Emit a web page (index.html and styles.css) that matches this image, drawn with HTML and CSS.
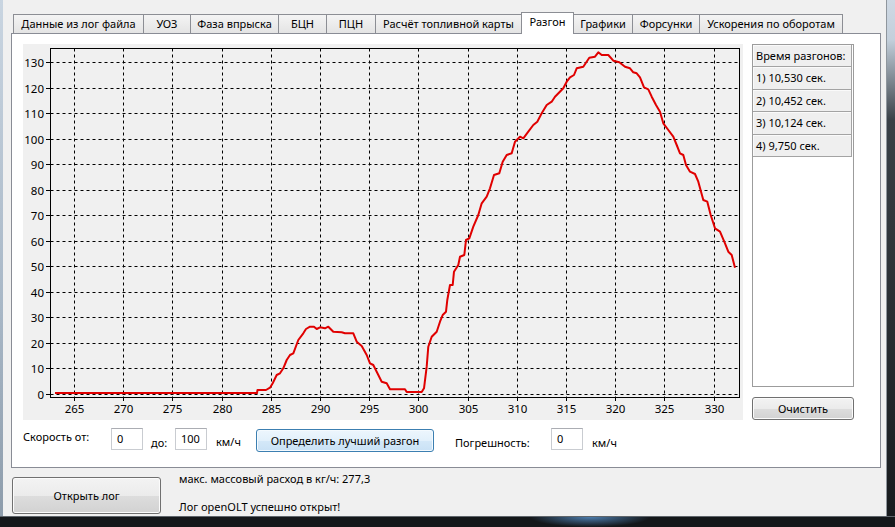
FILE: index.html
```html
<!DOCTYPE html>
<html lang="ru">
<head>
<meta charset="utf-8">
<title>Разгон</title>
<link rel="stylesheet" href="styles.css">
</head>
<body>
<div class="screen">
  <div class="frame-left"></div>
  <div class="client">
    <div class="tabwidget">
      <div class="tabbar">
        <div class="tab">Данные из лог файла</div>
        <div class="tab">УОЗ</div>
        <div class="tab">Фаза впрыска</div>
        <div class="tab">БЦН</div>
        <div class="tab">ПЦН</div>
        <div class="tab">Расчёт топливной карты</div>
        <div class="tab active">Разгон</div>
        <div class="tab">Графики</div>
        <div class="tab">Форсунки</div>
        <div class="tab">Ускорения по оборотам</div>
      </div>
      <div class="pane">
        <div class="pane-main">
          <svg class="chart" width="720" height="376" viewBox="0 0 720 376">
            <rect x="0" y="0" width="720" height="376" fill="#f0f0f0"/>
            <path class="grid" d="M51.5 4.5V353 M100.5 4.5V353 M149.5 4.5V353 M199.5 4.5V353 M248.5 4.5V353 M297.5 4.5V353 M346.5 4.5V353 M395.5 4.5V353 M445.5 4.5V353 M494.5 4.5V353 M543.5 4.5V353 M592.5 4.5V353 M641.5 4.5V353 M691.5 4.5V353
              M27.5 18.5H716.5 M27.5 44.5H716.5 M27.5 69.5H716.5 M27.5 95.5H716.5 M27.5 120.5H716.5 M27.5 146.5H716.5 M27.5 171.5H716.5 M27.5 197.5H716.5 M27.5 222.5H716.5 M27.5 248.5H716.5 M27.5 273.5H716.5 M27.5 299.5H716.5 M27.5 324.5H716.5 M27.5 350.5H716.5"/>
            <rect class="frame" x="27.5" y="4.5" width="689" height="349"/>
            <path class="ticks" d="M23 18.5H27.5 M23 44.5H27.5 M23 69.5H27.5 M23 95.5H27.5 M23 120.5H27.5 M23 146.5H27.5 M23 171.5H27.5 M23 197.5H27.5 M23 222.5H27.5 M23 248.5H27.5 M23 273.5H27.5 M23 299.5H27.5 M23 324.5H27.5 M23 350.5H27.5
              M51.5 353V357 M100.5 353V357 M149.5 353V357 M199.5 353V357 M248.5 353V357 M297.5 353V357 M346.5 353V357 M395.5 353V357 M445.5 353V357 M494.5 353V357 M543.5 353V357 M592.5 353V357 M641.5 353V357 M691.5 353V357"/>
            <g class="ylab">
              <text x="21" y="22.5">130</text>
              <text x="21" y="48.5">120</text>
              <text x="21" y="73.5">110</text>
              <text x="21" y="99.5">100</text>
              <text x="21" y="124.5">90</text>
              <text x="21" y="150.5">80</text>
              <text x="21" y="175.5">70</text>
              <text x="21" y="201.5">60</text>
              <text x="21" y="226.5">50</text>
              <text x="21" y="252.5">40</text>
              <text x="21" y="277.5">30</text>
              <text x="21" y="303.5">20</text>
              <text x="21" y="328.5">10</text>
              <text x="21" y="354.5">0</text>
            </g>
            <g class="xlab">
              <text x="51.5" y="369">265</text>
              <text x="100.5" y="369">270</text>
              <text x="149.5" y="369">275</text>
              <text x="199.5" y="369">280</text>
              <text x="248.5" y="369">285</text>
              <text x="297.5" y="369">290</text>
              <text x="346.5" y="369">295</text>
              <text x="395.5" y="369">300</text>
              <text x="445.5" y="369">305</text>
              <text x="494.5" y="369">310</text>
              <text x="543.5" y="369">315</text>
              <text x="592.5" y="369">320</text>
              <text x="641.5" y="369">325</text>
              <text x="691.5" y="369">330</text>
            </g>
            <g transform="translate(-23 -44)">
              <polyline class="curve" points="55,393 257,393 257.5,390 266,390 270,387.7 272.7,383.3 276.7,375 280,373.3 283.3,368.3 286.7,360 290,355 293.3,353.3 298.3,340 303.3,333.3 306,329 310,326.7 314,326.7 316.7,329 320,327.3 325,328.3 328.3,326.7 333.3,331.7 341.7,332.3 345,333.3 353.3,333.3 356.7,341.7 361.7,346 366.7,355 370,363.3 373.3,365 376.7,371.7 381.7,381.7 386.7,383.3 390,389.3 405,389.3 406.7,392 421.7,392 424,388.3 426.7,366.7 428.3,346.7 431.7,336.7 436.7,331.7 440,321.7 442.7,315 446,311.7 447.3,300 450,285 452.7,285 454,271.7 458.3,265 460,256.7 464.3,255 466,240 469.3,238.3 473.3,226.7 478.3,215 481.7,203.3 486.7,196.7 490,188.3 494,175 499.3,173.3 502.7,161.7 506.7,155 511.7,153.3 515,141.7 520,136.7 523.3,138.3 528.3,131.7 533.3,125 537.3,121.7 541.7,113.3 546.7,105 551.7,101.7 555,96.7 563.3,88.3 566.7,81.7 570,77.3 574,75 576.7,68.3 583.3,66.7 589.3,57.7 595,56.7 598.3,52.3 601.7,55 608.3,55 613.3,60.7 619.3,62.3 625,66.7 630,68.3 633.3,72.3 636.7,73.3 640,77.3 644,87.3 648.3,89.3 651.7,96.7 656,105 660,111.7 663.3,123.3 668.3,130 673.3,136.7 676.7,145 680,153.3 683.3,155 686,165 690,171.7 695,174 698.3,181.7 703.3,200 707.3,201.7 710.7,215 715,228.3 720,231.7 725,243.3 728.3,251.7 731.7,255 735,267.7"/>
            </g>
          </svg>
          <div class="side">
            <div class="list">
              <div class="item">Время разгонов:</div>
              <div class="item">1) 10,530 сек.</div>
              <div class="item">2) 10,452 сек.</div>
              <div class="item">3) 10,124 сек.</div>
              <div class="item">4) 9,750 сек.</div>
            </div>
            <button class="btn btn-clear">Очистить</button>
          </div>
        </div>
        <div class="controls">
          <span class="lbl lbl-from">Скорость от:</span>
          <div class="field">0</div>
          <span class="lbl lbl-to">до:</span>
          <div class="field">100</div>
          <span class="lbl lbl-unit">км/ч</span>
          <button class="btn btn-primary">Определить лучший разгон</button>
          <span class="lbl lbl-err">Погрешность:</span>
          <div class="field">0</div>
          <span class="lbl lbl-unit2">км/ч</span>
        </div>
      </div>
    </div>
    <div class="bottom">
      <button class="btn btn-open">Открыть лог</button>
      <div class="status">
        <div class="status-line">макс. массовый расход в кг/ч: 277,3</div>
        <div class="status-line second">Лог openOLT успешно открыт!</div>
      </div>
    </div>
  </div>
  <div class="frame-right"></div>
</div>
<div class="frame-bottom"></div>
</body>
</html>
```

FILE: styles.css
```css
html, body {
  margin: 0;
  padding: 0;
}
body {
  width: 895px;
  height: 527px;
  overflow: hidden;
  background: #14171a;
  font-family: "Noto Sans", "Open Sans", sans-serif;
  font-size: 11px;
  color: #000;
}
.screen {
  display: flex;
  height: 516px;
}
.frame-left {
  width: 3px;
  background: linear-gradient(#c9d5e1, #a8b7c6 60%, #8d9cab);
}
.client {
  box-sizing: border-box;
  width: 884px;
  padding: 12px 0 0 8px;
  background: #f0f0f0;
  border-right: 1px solid #8f969d;
}
.frame-right {
  width: 8px;
  background: linear-gradient(#cfd9e4 0, #c3cfdb 40px, #3a4148 120px, #181b1e 100%);
}
.frame-bottom {
  box-sizing: border-box;
  height: 11px;
  border-top: 1px solid #5f656b;
  background: radial-gradient(ellipse 60px 10px at 590px 0, rgba(90, 150, 210, 0.8), rgba(20, 23, 26, 0)), #14171a;
}

/* Tabs */
.tabwidget {
  width: 870px;
}
.tabbar {
  display: flex;
  align-items: flex-end;
  height: 21px;
  padding-left: 2px;
}
.tab {
  box-sizing: border-box;
  height: 19px;
  border: 1px solid #8c8e94;
  border-bottom: none;
  margin-left: -1px;
  background: linear-gradient(#f4f4f4, #e4e4e4);
  display: flex;
  align-items: center;
  justify-content: center;
  white-space: nowrap;
  line-height: 16px;
}
.tab:first-child { margin-left: 0; width: 131px; }
.tab:nth-child(2) { width: 48px; }
.tab:nth-child(3) { width: 89px; }
.tab:nth-child(4) { width: 49px; }
.tab:nth-child(5) { width: 50px; }
.tab:nth-child(6) { width: 147px; }
.tab:nth-child(7) { width: 53px; }
.tab:nth-child(8) { width: 60px; }
.tab:nth-child(9) { width: 68px; }
.tab:nth-child(10) { width: 144px; }
.tab.active {
  height: 22px;
  margin-bottom: -1px;
  padding-bottom: 3px;
  background: #fff;
  position: relative;
  z-index: 1;
}

.pane {
  box-sizing: border-box;
  height: 435px;
  border: 1px solid #898c95;
  background: #fff;
  padding: 10px 0 0 11px;
}
.pane-main {
  display: flex;
  gap: 9px;
  height: 376px;
}
.chart {
  display: block;
  flex: none;
}
.grid {
  fill: none;
  stroke: #000;
  stroke-width: 1;
  stroke-dasharray: 3 3;
}
.frame {
  fill: none;
  stroke: #000;
  stroke-width: 1;
}
.ticks {
  fill: none;
  stroke: #000;
  stroke-width: 1;
}
.ylab text {
  font-family: "Noto Sans", sans-serif;
  font-size: 11.5px;
  text-anchor: end;
  fill: #000;
}
.xlab text {
  font-family: "Noto Sans", sans-serif;
  font-size: 11.5px;
  text-anchor: middle;
  fill: #000;
}
.curve {
  fill: none;
  stroke: #e00000;
  stroke-width: 2;
  stroke-linejoin: round;
}

.side {
  width: 102px;
  flex: none;
  display: flex;
  flex-direction: column;
}
.list {
  box-sizing: border-box;
  height: 343px;
  border: 1px solid #9c9c9c;
  background: #fff;
}
.item {
  box-sizing: border-box;
  height: 22.4px;
  margin-right: 1px;
  padding-left: 3px;
  line-height: 21px;
  background: #efefef;
  border-right: 1px solid #a3a3a3;
  border-bottom: 1px solid #a3a3a3;
  box-shadow: inset 1px 1px #fafafa;
  white-space: nowrap;
}

.btn {
  box-sizing: border-box;
  font-family: inherit;
  font-size: 11px;
  color: #000;
  border: 1px solid #707070;
  border-radius: 3px;
  background: linear-gradient(#f3f3f3 0%, #ebebeb 50%, #dddddd 51%, #d2d2d2 100%);
  box-shadow: inset 0 0 0 1px #fbfbfb;
  padding: 0;
  margin: 0;
}
.btn-clear {
  margin-top: 10px;
  height: 23px;
  width: 102px;
}
.btn-primary {
  width: 178px;
  height: 23px;
  margin-top: 1px;
  border-color: #3c7fb1;
  background: linear-gradient(#edf6fd 0%, #e2f0fb 50%, #d4e8f8 51%, #c9e1f5 100%);
  box-shadow: inset 0 0 0 1px #f4fafe;
}
.btn-open {
  width: 149px;
  height: 37px;
  margin-left: 1px;
  flex: none;
}

.controls {
  display: flex;
  align-items: flex-start;
  height: 24px;
  margin-top: 8px;
}
.lbl {
  line-height: 16px;
  white-space: nowrap;
}
.lbl-from { width: 88px; margin-top: 1px; }
.lbl-to { width: 24px; margin-left: 8px; margin-top: 7px; }
.lbl-unit { width: 40px; margin-left: 9px; margin-top: 6px; }
.lbl-err { width: 96px; margin-left: 21px; margin-top: 7px; }
.lbl-unit2 { margin-left: 9px; margin-top: 7px; }
.field {
  box-sizing: border-box;
  width: 32px;
  height: 22px;
  border: 1px solid #c9ccd1;
  border-top-color: #abadb3;
  background: #fff;
  padding: 2px 0 0 5px;
  line-height: 16px;
}

.bottom {
  display: flex;
  margin-top: 9px;
}
.status {
  margin-left: 18px;
  margin-top: -6px;
}
.status-line {
  line-height: 16px;
  white-space: nowrap;
}
.status-line.second {
  margin-top: 12px;
}
```
